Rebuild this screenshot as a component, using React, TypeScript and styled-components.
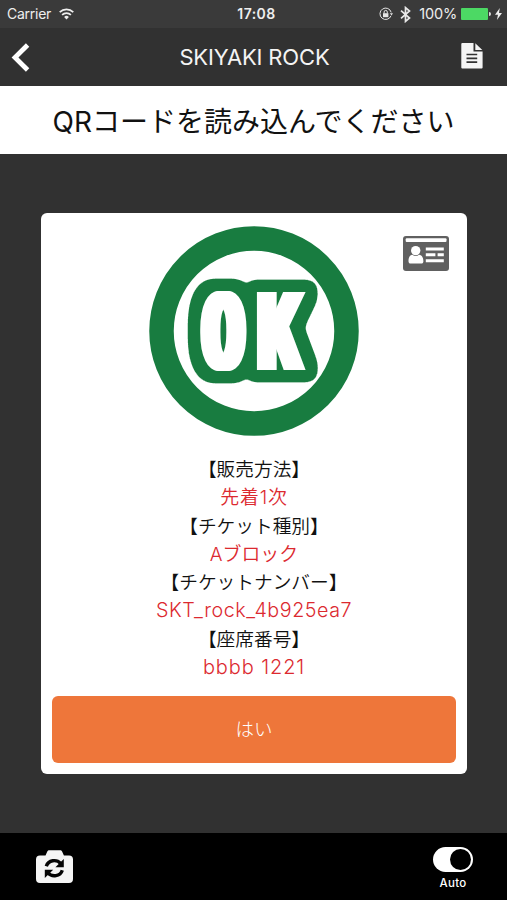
import React from 'react';
import styled, { createGlobalStyle } from 'styled-components';

const Global = createGlobalStyle`
  * { box-sizing: border-box; }
  body { margin: 0; background: #313131; }
  svg { display: block; flex: none; }
`;

const Screen = styled.div`
  width: 507px;
  height: 900px;
  display: flex;
  flex-direction: column;
  background: #313131;
  color: #fff;
  font-family: Inter, 'Noto Sans CJK JP', sans-serif;
  overflow: hidden;
`;

const StatusBar = styled.div`
  height: 28px;
  flex: none;
  display: grid;
  grid-template-columns: 1fr auto 1fr;
  align-items: center;
  padding: 0 5px 0 7px;
  background: #3a3a3a;
  color: #eee;
  font-size: 14px;
  line-height: 28px;
`;

const StatusGroup = styled.div<{ $end?: boolean }>`
  display: flex;
  align-items: center;
  justify-content: ${p => (p.$end ? 'flex-end' : 'flex-start')};
`;

const Carrier = styled.span`
  letter-spacing: -0.25px;
  margin-right: 8px;
`;

const Clock = styled.span`
  font-weight: 600;
  letter-spacing: 0.45px;
  padding-left: 4px;
`;

const Percent = styled.span`
  font-size: 14.5px;
  margin: 0 4px 0 8px;
  letter-spacing: -0.2px;
`;

const NavBar = styled.header`
  height: 58px;
  flex: none;
  display: grid;
  grid-template-columns: 60px 1fr 60px;
  align-items: center;
  background: #313131;
`;

const NavButton = styled.button<{ $end?: boolean }>`
  border: 0;
  background: none;
  padding: ${p => (p.$end ? '0 24px 2px 0' : '0 0 0 11px')};
  display: flex;
  justify-content: ${p => (p.$end ? 'flex-end' : 'flex-start')};
`;

const Title = styled.h1`
  margin: 0;
  text-align: center;
  font-size: 22px;
  font-weight: 380;
  letter-spacing: -0.15px;
  line-height: 58px;
  padding-left: 2px;
  color: #f4f4f4;
`;

const Prompt = styled.div`
  height: 68px;
  flex: none;
  background: #fff;
  color: #111;
  text-align: center;
  font-size: 28px;
  font-weight: 400;
  line-height: 72px;
  white-space: nowrap;
`;

const Stage = styled.main`
  flex: 1;
  padding: 59px 40px 0 41px;
`;

const Card = styled.section`
  position: relative;
  height: 561px;
  padding: 13px 11px 11px;
  border-radius: 6px;
  background: #fff;
  display: flex;
  flex-direction: column;
  align-items: center;
`;

const CardBadge = styled.div`
  position: absolute;
  top: 23px;
  right: 18px;
`;

const Details = styled.dl`
  margin: 19px 0 0;
  text-align: center;
  font-size: 18.7px;
  font-weight: 350;
`;

const Label = styled.dt`
  height: 28.3px;
  line-height: 29px;
  color: #111;
`;

const Value = styled.dd<{ $size?: number; $spacing?: number }>`
  margin: 0;
  height: 28.3px;
  line-height: 29px;
  color: #dc292f;
  font-size: ${p => p.$size ?? 18.9}px;
  letter-spacing: ${p => p.$spacing ?? 0}px;
`;

const Confirm = styled.button`
  width: 100%;
  height: 67px;
  margin-top: auto;
  padding: 0 0 2px;
  border: 0;
  border-radius: 6px;
  background: #ee763a;
  color: #fff;
  font: 300 18.5px/65px 'Noto Sans CJK JP', sans-serif;
`;

const BottomBar = styled.footer`
  height: 67px;
  flex: none;
  background: #000;
  display: flex;
  justify-content: space-between;
  align-items: flex-start;
  padding: 14px 34px 0 36px;
`;

const CameraButton = styled.div`
  padding-top: 3px;
`;

const AutoControl = styled.div`
  display: flex;
  flex-direction: column;
  align-items: center;
  font-size: 11.5px;
  font-weight: 500;
  line-height: 16px;
  letter-spacing: 0.3px;
  gap: 3px;
`;

const Track = styled.div`
  width: 40px;
  height: 25px;
  border-radius: 13px;
  background: #fff;
  display: flex;
  align-items: center;
  justify-content: flex-end;
  padding-right: 2px;
`;

const Knob = styled.div`
  width: 21px;
  height: 21px;
  border-radius: 50%;
  background: #000;
`;

const WifiIcon = () => (
  <svg width="15" height="12" viewBox="0 0 15 12" fill="none" stroke="#eee" strokeWidth="1.7">
    <path d="M.7 4.2a9.8 9.8 0 0 1 13.6 0M3.1 6.9a6.3 6.3 0 0 1 8.8 0" />
    <path d="M7.5 11.4 5.1 9a3.5 3.5 0 0 1 4.8 0Z" fill="#eee" stroke="none" />
  </svg>
);

const LockIcon = () => (
  <svg width="14" height="14" viewBox="0 0 14 14" fill="none" stroke="#e4e4e4">
    <path d="M12 8.8A5.7 5.7 0 1 1 12.2 5.4" strokeWidth="1" />
    <path d="m10.8 6.3 3.2 0-1.5 2.2Z" fill="#e4e4e4" stroke="none" />
    <rect x="4" y="6.2" width="5.4" height="4" fill="#e4e4e4" stroke="none" />
    <path d="M5.1 6.5V5a1.6 1.6 0 0 1 3.2 0v1.5" strokeWidth="1" />
  </svg>
);

const BluetoothIcon = () => (
  <svg width="11" height="17" viewBox="0 0 11 17" fill="none" stroke="#e8e8e8" strokeWidth="1.7">
    <path d="M1 4.7 9.5 12 5.5 15.4V1.6L9.5 5 1 12.3" />
  </svg>
);

const BatteryIcon = () => (
  <svg width="30" height="12" viewBox="0 0 30 12">
    <rect width="27" height="12" rx="1" fill="#4cd964" />
    <path d="M28 4a2 2 0 0 1 0 4Z" fill="#ddd" />
  </svg>
);

const BoltIcon = () => (
  <svg width="7" height="12" viewBox="0 0 7 12" fill="#eee">
    <path d="M4.8 0 0 6.8h3L1.9 12 7 5H4Z" />
  </svg>
);

const BackIcon = () => (
  <svg width="19" height="29" viewBox="0 0 19 29" fill="none" stroke="#fff" strokeWidth="4.8">
    <path d="M16.6 2 4 14.5 16.6 27" />
  </svg>
);

const DocumentIcon = () => (
  <svg width="22" height="26" viewBox="0 0 22 26">
    <path d="M1.3 0H12.5v8.4h9.1v16.1a1 1 0 0 1-1 1H1.3a1 1 0 0 1-1-1V1a1 1 0 0 1 1-1Z" fill="#f4f4f4" />
    <path d="m14.3.3 7 6.6h-7Z" fill="#f4f4f4" />
    <path d="M5.5 11.5h10.7M5.5 15.3h10.7M5.5 19.1h10.7" stroke="#313131" strokeWidth="1.7" />
  </svg>
);

const IdCardIcon = () => (
  <svg width="46" height="35" viewBox="0 0 46 35">
    <rect width="46" height="35" rx="3" fill="#606060" />
    <g fill="#fff">
      <rect x="2.7" y="2.3" width="40.8" height="3.6" rx="1" />
      <circle cx="12.7" cy="14.6" r="4.7" />
      <path d="M5.5 25.3c0-4 1.6-6.4 3.9-6.5 2 1.6 4.6 1.6 6.6 0 2.5.1 4.4 2.5 4.4 6.5 0 1.6-.9 2.3-2 2.3H7.5c-1.1 0-2-.7-2-2.3Z" />
      <path d="M22.8 11.5h18v3h-18zM22.8 17.3h9.6v3h-9.6zM34.6 17.3h6.2v3h-6.2zM22.8 23.3h18v3h-18z" />
    </g>
  </svg>
);

const CameraIcon = () => (
  <svg width="37" height="33" viewBox="0 0 37 33">
    <path
      d="M4 5.5h5.5l1.8-4C11.7.6 12.4.2 13.3.2h10.8c.9 0 1.6.4 2 1.3l1.8 4H33a4 4 0 0 1 4 4V29a4 4 0 0 1-4 4H4a4 4 0 0 1-4-4V9.5a4 4 0 0 1 4-4Z"
      fill="#f5f5f5"
    />
    <g fill="none" stroke="#050505" strokeWidth="3.4">
      <path d="M10.3 16.2c2-6.3 10.3-7.3 14.4-2.7" />
      <path d="M26.3 20.2c-2 6.3-10.3 7.3-14.4 2.7" />
    </g>
    <path d="M27.8 9v8.2h-8.4zM8.8 28v-8.2h8.4z" fill="#050505" />
  </svg>
);

const okLetters = [
  { char: 'O', x: 54.3, scale: 0.53, embolden: 5 },
  { char: 'K', x: 108.3, scale: 0.62, embolden: 4 },
];

const OkMark = () => (
  <svg width="210" height="210" viewBox="0 0 210 210">
    <defs>
      <g id="ok-letters" fontFamily="Roboto" fontWeight={900} fontSize={110}>
        {okLetters.map(({ char, x, scale, embolden }) =>
          Array.from({ length: embolden * 2 + 1 }, (_, i) => (
            <text key={char + i} transform={`translate(${x + i - embolden} 144) scale(${scale} 1)`}>
              {char}
            </text>
          )),
        )}
      </g>
      <filter
        id="round-outline"
        filterUnits="userSpaceOnUse"
        x="0"
        y="0"
        width="210"
        height="210"
        colorInterpolationFilters="sRGB"
      >
        <feMorphology in="SourceAlpha" operator="dilate" radius="6" />
        <feGaussianBlur stdDeviation="4" />
        <feComponentTransfer result="shape">
          <feFuncA type="linear" slope="30" intercept="-1.4" />
        </feComponentTransfer>
        <feFlood floodColor="#187c40" />
        <feComposite in2="shape" operator="in" />
      </filter>
    </defs>
    <circle cx="105" cy="105" r="92.5" fill="#fff" stroke="#187c40" strokeWidth="24.5" />
    <use href="#ok-letters" filter="url(#round-outline)" />
    <use href="#ok-letters" fill="#fff" />
  </svg>
);

const details = [
  { label: '【販売方法】', value: '先着1次', spacing: 0.9 },
  { label: '【チケット種別】', value: 'Aブロック' },
  { label: '【チケットナンバー】', value: 'SKT_rock_4b925ea7', size: 19.7, spacing: 0.55 },
  { label: '【座席番号】', value: 'bbbb 1221', size: 20, spacing: 0.9 },
];

export default function App() {
  return (
    <Screen>
      <Global />
      <StatusBar>
        <StatusGroup>
          <Carrier>Carrier</Carrier>
          <WifiIcon />
        </StatusGroup>
        <Clock>17:08</Clock>
        <StatusGroup $end>
          <LockIcon />
          <svg width="7" height="1" />
          <BluetoothIcon />
          <Percent>100%</Percent>
          <BatteryIcon />
          <svg width="4" height="1" />
          <BoltIcon />
        </StatusGroup>
      </StatusBar>
      <NavBar>
        <NavButton aria-label="Back"><BackIcon /></NavButton>
        <Title>SKIYAKI ROCK</Title>
        <NavButton $end aria-label="Document"><DocumentIcon /></NavButton>
      </NavBar>
      <Prompt>QRコードを読み込んでください</Prompt>
      <Stage>
        <Card>
          <OkMark />
          <CardBadge><IdCardIcon /></CardBadge>
          <Details>
            {details.map(d => (
              <React.Fragment key={d.label}>
                <Label>{d.label}</Label>
                <Value $size={d.size} $spacing={d.spacing}>{d.value}</Value>
              </React.Fragment>
            ))}
          </Details>
          <Confirm>はい</Confirm>
        </Card>
      </Stage>
      <BottomBar>
        <CameraButton><CameraIcon /></CameraButton>
        <AutoControl>
          <Track><Knob /></Track>
          Auto
        </AutoControl>
      </BottomBar>
    </Screen>
  );
}
